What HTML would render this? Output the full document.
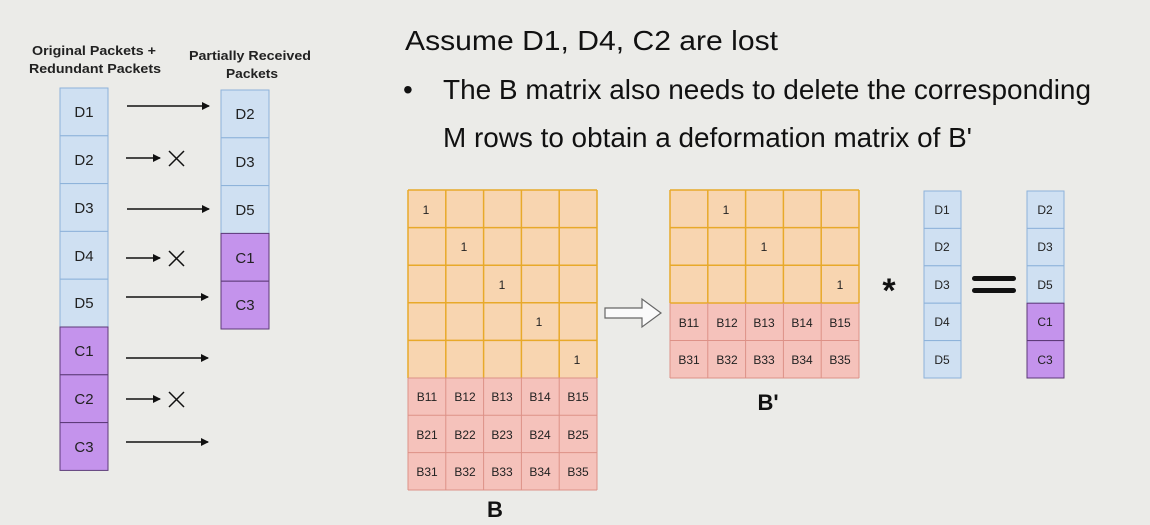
<!DOCTYPE html>
<html><head><meta charset="utf-8"><style>
html,body{margin:0;padding:0;background:#ebebe8;}
svg{display:block;font-family:"Liberation Sans",Arial,sans-serif;}
</style></head><body>
<svg width="1150" height="525" viewBox="0 0 1150 525" xmlns="http://www.w3.org/2000/svg">
<rect width="1150" height="525" fill="#ebebe8"/>
<defs>
<marker id="ah" markerWidth="8" markerHeight="8" refX="7" refY="4" orient="auto" markerUnits="userSpaceOnUse"><path d="M0,0 L8,4 L0,8 z" fill="#111"/></marker>
</defs>
<g fill="#111" font-size="28">
<text x="405" y="50" textLength="373" lengthAdjust="spacingAndGlyphs">Assume D1, D4, C2 are lost</text>
<text x="403" y="99">•</text>
<text x="443" y="99" textLength="648" lengthAdjust="spacingAndGlyphs">The B matrix also needs to delete the corresponding</text>
<text x="443" y="147" textLength="529" lengthAdjust="spacingAndGlyphs">M rows to obtain a deformation matrix of B'</text>
</g>
<g font-size="13" font-weight="bold" fill="#222" text-anchor="middle">
<text x="94" y="55" textLength="124" lengthAdjust="spacingAndGlyphs">Original Packets +</text>
<text x="95" y="73" textLength="132" lengthAdjust="spacingAndGlyphs">Redundant Packets</text>
<text x="250" y="60" textLength="122" lengthAdjust="spacingAndGlyphs">Partially Received</text>
<text x="252" y="78" textLength="52" lengthAdjust="spacingAndGlyphs">Packets</text>
</g>
<g font-size="15" fill="#222" text-anchor="middle">
<rect x="60" y="88" width="48" height="47.8" fill="#cfe0f2" stroke="#8db2da"/><text x="84" y="117">D1</text>
<rect x="60" y="135.8" width="48" height="47.8" fill="#cfe0f2" stroke="#8db2da"/><text x="84" y="165">D2</text>
<rect x="60" y="183.6" width="48" height="47.8" fill="#cfe0f2" stroke="#8db2da"/><text x="84" y="213">D3</text>
<rect x="60" y="231.4" width="48" height="47.8" fill="#cfe0f2" stroke="#8db2da"/><text x="84" y="261">D4</text>
<rect x="60" y="279.2" width="48" height="47.8" fill="#cfe0f2" stroke="#8db2da"/><text x="84" y="308">D5</text>
<rect x="60" y="327" width="48" height="47.8" fill="#c493ec" stroke="#5c3a78"/><text x="84" y="356">C1</text>
<rect x="60" y="374.8" width="48" height="47.8" fill="#c493ec" stroke="#5c3a78"/><text x="84" y="404">C2</text>
<rect x="60" y="422.6" width="48" height="47.8" fill="#c493ec" stroke="#5c3a78"/><text x="84" y="452">C3</text>
<rect x="221" y="90" width="48" height="47.8" fill="#cfe0f2" stroke="#8db2da"/><text x="245" y="119">D2</text>
<rect x="221" y="137.8" width="48" height="47.8" fill="#cfe0f2" stroke="#8db2da"/><text x="245" y="167">D3</text>
<rect x="221" y="185.6" width="48" height="47.8" fill="#cfe0f2" stroke="#8db2da"/><text x="245" y="215">D5</text>
<rect x="221" y="233.4" width="48" height="47.8" fill="#c493ec" stroke="#5c3a78"/><text x="245" y="263">C1</text>
<rect x="221" y="281.2" width="48" height="47.8" fill="#c493ec" stroke="#5c3a78"/><text x="245" y="310">C3</text>
</g>
<g stroke="#111" stroke-width="1.5" fill="none">
<line x1="127" y1="106" x2="209" y2="106" marker-end="url(#ah)"/>
<line x1="126" y1="158" x2="160" y2="158" marker-end="url(#ah)"/>
<line x1="127" y1="209" x2="209" y2="209" marker-end="url(#ah)"/>
<line x1="126" y1="258" x2="160" y2="258" marker-end="url(#ah)"/>
<line x1="126" y1="297" x2="208" y2="297" marker-end="url(#ah)"/>
<line x1="126" y1="358" x2="208" y2="358" marker-end="url(#ah)"/>
<line x1="126" y1="399" x2="160" y2="399" marker-end="url(#ah)"/>
<line x1="126" y1="442" x2="208" y2="442" marker-end="url(#ah)"/>
<path d="M169,151 L184,166 M184,151 L169,166 M169,251 L184,266 M184,251 L169,266 M169,392 L184,407 M184,392 L169,407"/>
</g>
<rect x="408" y="190" width="189" height="188" fill="#f8d5b0"/>
<rect x="408" y="378" width="189" height="112" fill="#f5c2bb"/>
<g stroke="#e8a92a" stroke-width="1.5">
<path d="M408,190V378M445.8,190V378M483.6,190V378M521.4,190V378M559.2,190V378M597,190V378"/>
<path d="M408,190H597M408,227.6H597M408,265.2H597M408,302.8H597M408,340.4H597"/>
</g>
<g stroke="#dd9187" stroke-width="1">
<path d="M408,378V490M445.8,378V490M483.6,378V490M521.4,378V490M559.2,378V490M597,378V490"/>
<path d="M408,378H597M408,415.3H597M408,452.6H597M408,490H597"/>
</g>
<g font-size="12" fill="#222" text-anchor="middle">
<text x="426" y="214">1</text><text x="464" y="251">1</text><text x="502" y="289">1</text><text x="539" y="326">1</text><text x="577" y="364">1</text>
<text x="427" y="401">B11</text><text x="465" y="401">B12</text><text x="502" y="401">B13</text><text x="540" y="401">B14</text><text x="578" y="401">B15</text>
<text x="427" y="439">B21</text><text x="465" y="439">B22</text><text x="502" y="439">B23</text><text x="540" y="439">B24</text><text x="578" y="439">B25</text>
<text x="427" y="476">B31</text><text x="465" y="476">B32</text><text x="502" y="476">B33</text><text x="540" y="476">B34</text><text x="578" y="476">B35</text>
</g>
<text x="495" y="517" font-size="22" font-weight="bold" fill="#111" text-anchor="middle">B</text>
<path d="M605,308 H642 V299 L661,313 L642,327 V318 H605 Z" fill="#fafafa" stroke="#666" stroke-width="1.2"/>
<rect x="670" y="190" width="189" height="113" fill="#f8d5b0"/>
<rect x="670" y="303" width="189" height="75" fill="#f5c2bb"/>
<g stroke="#e8a92a" stroke-width="1.5">
<path d="M670,190V303M707.8,190V303M745.6,190V303M783.4,190V303M821.2,190V303M859,190V303"/>
<path d="M670,190H859M670,227.6H859M670,265.2H859M670,303H859"/>
</g>
<g stroke="#dd9187" stroke-width="1">
<path d="M670,303V378M707.8,303V378M745.6,303V378M783.4,303V378M821.2,303V378M859,303V378"/>
<path d="M670,340.5H859M670,378H859"/>
</g>
<g font-size="12" fill="#222" text-anchor="middle">
<text x="726" y="214">1</text><text x="764" y="251">1</text><text x="840" y="289">1</text>
<text x="689" y="327">B11</text><text x="727" y="327">B12</text><text x="764" y="327">B13</text><text x="802" y="327">B14</text><text x="840" y="327">B15</text>
<text x="689" y="364">B31</text><text x="727" y="364">B32</text><text x="764" y="364">B33</text><text x="802" y="364">B34</text><text x="840" y="364">B35</text>
</g>
<text x="768" y="410" font-size="22" font-weight="bold" fill="#111" text-anchor="middle">B'</text>
<text x="889" y="302" font-size="34" font-weight="bold" fill="#111" text-anchor="middle">*</text>
<rect x="972" y="276" width="44" height="5" rx="2.5" fill="#111"/>
<rect x="972" y="288" width="44" height="5" rx="2.5" fill="#111"/>
<g font-size="12" fill="#222" text-anchor="middle">
<rect x="924" y="191" width="37" height="37.4" fill="#cfe0f2" stroke="#8db2da"/><text x="942" y="214">D1</text>
<rect x="924" y="228.4" width="37" height="37.4" fill="#cfe0f2" stroke="#8db2da"/><text x="942" y="251">D2</text>
<rect x="924" y="265.8" width="37" height="37.4" fill="#cfe0f2" stroke="#8db2da"/><text x="942" y="289">D3</text>
<rect x="924" y="303.2" width="37" height="37.4" fill="#cfe0f2" stroke="#8db2da"/><text x="942" y="326">D4</text>
<rect x="924" y="340.6" width="37" height="37.4" fill="#cfe0f2" stroke="#8db2da"/><text x="942" y="364">D5</text>
<rect x="1027" y="191" width="37" height="37.4" fill="#cfe0f2" stroke="#8db2da"/><text x="1045" y="214">D2</text>
<rect x="1027" y="228.4" width="37" height="37.4" fill="#cfe0f2" stroke="#8db2da"/><text x="1045" y="251">D3</text>
<rect x="1027" y="265.8" width="37" height="37.4" fill="#cfe0f2" stroke="#8db2da"/><text x="1045" y="289">D5</text>
<rect x="1027" y="303.2" width="37" height="37.4" fill="#c493ec" stroke="#5c3a78"/><text x="1045" y="326">C1</text>
<rect x="1027" y="340.6" width="37" height="37.4" fill="#c493ec" stroke="#5c3a78"/><text x="1045" y="364">C3</text>
</g>
</svg>
</body></html>
